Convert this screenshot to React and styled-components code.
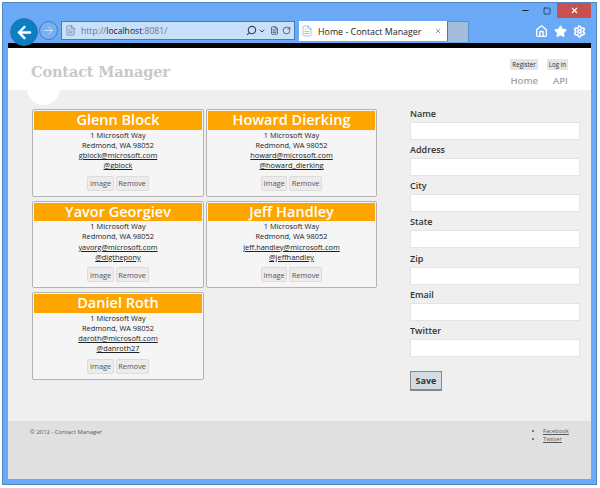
import React from 'react';
import styled, { createGlobalStyle } from 'styled-components';
import { ArrowLeft, ArrowRight, Search, ChevronDown, RotateCw, X, Home, Star, Settings, Minus, Square, FileText } from 'lucide-react';

const Global = createGlobalStyle`
  html, body { margin: 0; padding: 0; background: #fff; }
  body { width: 600px; height: 488px; overflow: hidden; font-family: "Open Sans", "Liberation Sans", sans-serif; }
  * { box-sizing: border-box; }
`;

const Page = styled.div`
  width: 600px;
  height: 488px;
  padding: 2px 3px 3px 2px;
`;
const Win = styled.div`
  height: 100%;
  background: #69a9f5;
  border: 1px solid #4f87c9;
  padding: 0 5px 5px 5px;
  display: flex;
  flex-direction: column;
`;
const TitleBar = styled.div`
  height: 18px;
  display: flex;
  justify-content: flex-end;
  align-items: flex-start;
  color: #1c2a3a;
`;
const WinBtn = styled.div`
  width: ${p => p.$w || 21}px;
  height: 15px;
  display: flex;
  align-items: center;
  justify-content: center;
  background: ${p => p.$close ? '#c75050' : 'transparent'};
  color: ${p => p.$close ? '#fff' : '#14202e'};
`;
const Chrome = styled.div`
  height: 22px;
  display: flex;
  align-items: flex-end;
  position: relative;
`;
const BackBtn = styled.div`
  position: absolute;
  left: 2px;
  top: -3px;
  width: 28px;
  height: 28px;
  border-radius: 50%;
  background: #0a7fc4;
  border: 1px solid #3a6fa8;
  display: flex;
  align-items: center;
  justify-content: center;
  color: #fff;
`;
const Forward = styled.div`
  position: absolute;
  left: 31px;
  top: 0;
  width: 19px;
  height: 19px;
  border-radius: 50%;
  border: 1px solid #3f7cc0;
  background: #76b0f5;
  display: flex;
  align-items: center;
  justify-content: center;
  color: #dfeafa;
`;
const Address = styled.div`
  margin-left: 53px;
  width: 234px;
  height: 19px;
  margin-bottom: 3px;
  background: #c8e0fa;
  border: 1px solid #3f7cc0;
  display: flex;
  align-items: center;
  padding: 0 3px;
  gap: 1px;
  color: #33475c;
`;
const Url = styled.span`
  flex: 1;
  margin-left: 4px;
  font-size: 8.6px;
  color: #6b7886;
  b { color: #222; font-weight: 400; }
`;
const Tab = styled.div`
  margin-left: 4px;
  width: 149px;
  height: 20px;
  margin-bottom: 2px;
  background: #fff;
  border-right: 1px solid #3f7cc0;
  display: flex;
  align-items: center;
  padding: 0 5px 0 2px;
  font-size: 8.9px;
  color: #222;
  white-space: nowrap;
`;
const TabTitle = styled.span`
  flex: 1;
  margin-left: 5px;
`;
const NewTab = styled.div`
  width: 21px;
  height: 21px;
  margin-bottom: 1px;
  background: #a3bcdc;
  border: 1px solid #5b8fc9;
  border-left: 0;
  border-bottom: 0;
`;
const Tools = styled.div`
  margin-left: auto;
  width: 56px;
  height: 20px;
  margin-bottom: 2px;
  display: flex;
  align-items: center;
  gap: 6px;
  color: #fff;
`;
const Viewport = styled.div`
  flex: 1;
  display: flex;
  flex-direction: column;
  border-top: 5px solid #000;
  background: #efefef;
  min-height: 0;
  overflow: hidden;
`;
const Header = styled.header`
  height: 42px;
  background: #fff;
  padding: 5px 23px 0 23px;
  display: flex;
  justify-content: space-between;
  position: relative;
  &::after {
    content: '';
    position: absolute;
    left: 19px;
    top: 24px;
    width: 33px;
    height: 33px;
    border-radius: 50%;
    background: #fff;
  }
`;
const Logo = styled.h1`
  position: relative;
  z-index: 1;
  margin: 9px 0 0;
  font: 700 14.6px/20px "DejaVu Serif", "Liberation Serif", serif;
  letter-spacing: -0.2px;
  color: #c8c8c8;
`;
const HeadRight = styled.div`
  display: flex;
  flex-direction: column;
  align-items: flex-end;
`;
const Login = styled.div`
  display: flex;
  gap: 9px;
  margin-top: 6px;
`;
const LoginLink = styled.span`
  background: #dfe5e9;
  font-size: 6.2px;
  line-height: 11px;
  padding: 0 2px;
  color: #333;
`;
const Nav = styled.nav`
  display: flex;
  gap: 15px;
  margin-top: 4px;
  font-size: 9.5px;
  font-weight: 600;
  color: #a4a4a4;
  line-height: 13px;
`;
const Main = styled.main`
  height: 331px;
  display: flex;
  padding: 19px 11px 0 24px;
  gap: 32px;
`;
const Grid = styled.div`
  width: 346px;
  display: grid;
  grid-template-columns: 172px 171px;
  grid-auto-rows: 87.5px;
  column-gap: 2px;
  row-gap: 4px;
  align-content: start;
`;
const Card = styled.article`
  background: #f5f5f5;
  border: 1px solid #b3b3b3;
  border-radius: 2px;
  padding: 1px;
  display: flex;
  flex-direction: column;
  align-items: center;
`;
const Name = styled.h2`
  align-self: stretch;
  flex: none;
  margin: 0;
  height: 18.5px;
  background: #ffa500;
  color: #fff;
  text-align: center;
  font: 600 14.5px/18px "Open Sans", "DejaVu Sans", sans-serif;
`;
const Line = styled.div`
  font-size: 7.4px;
  line-height: 10.3px;
  color: #222;
  white-space: nowrap;
`;
const LinkLine = styled(Line)`
  text-decoration: underline;
`;
const Actions = styled.div`
  display: flex;
  gap: 2px;
  margin-top: 5px;
`;
const SmallBtn = styled.button`
  height: 15px;
  padding: 0 1.5px;
  border: 1px solid #dcdcdc;
  border-radius: 2px;
  background: #ececec;
  color: #555;
  font: 7.4px "Open Sans", sans-serif;
`;
const Form = styled.form`
  width: 170px;
  display: flex;
  flex-direction: column;
  margin-top: -1px;
`;
const Label = styled.label`
  font-size: 9px;
  font-weight: 600;
  line-height: 12px;
  color: #333;
  margin-bottom: 2px;
`;
const Input = styled.div`
  height: 18px;
  background: #fff;
  border: 1px solid #e4e4e4;
  margin-bottom: 4.17px;
`;
const Save = styled.button`
  align-self: flex-start;
  width: 32px;
  height: 20px;
  margin-top: 10px;
  background: #d3dce3;
  border: 1px solid #888;
  border-bottom-width: 2px;
  padding: 0;
  color: #333;
  font: 700 9px "Open Sans", sans-serif;
`;
const Footer = styled.footer`
  flex: 1;
  background: #e0e0e0;
  padding: 6px 24px 0 22px;
  display: flex;
  justify-content: space-between;
`;
const Copy = styled.div`
  font-size: 5.9px;
  line-height: 10px;
  color: #555;
`;
const Links = styled.ul`
  margin: 0;
  padding: 0 0 0 9px;
  width: 33px;
  font-size: 5.8px;
  line-height: 8px;
  color: #555;
  white-space: nowrap;
  li { text-decoration: underline; }
`;

const contacts = [
  ['Glenn Block', 'gblock@microsoft.com', '@gblock'],
  ['Howard Dierking', 'howard@microsoft.com', '@howard_dierking'],
  ['Yavor Georgiev', 'yavorg@microsoft.com', '@digthepony'],
  ['Jeff Handley', 'jeff.handley@microsoft.com', '@jeffhandley'],
  ['Daniel Roth', 'daroth@microsoft.com', '@danroth27'],
];
const fields = ['Name', 'Address', 'City', 'State', 'Zip', 'Email', 'Twitter'];

export default function App() {
  return (
    <Page>
      <Global />
      <Win>
        <TitleBar>
          <WinBtn><Minus size={9} strokeWidth={3} /></WinBtn>
          <WinBtn><Square size={8} strokeWidth={2} /></WinBtn>
          <WinBtn $close $w={34}><X size={9} strokeWidth={3} /></WinBtn>
        </TitleBar>
        <Chrome>
          <BackBtn><ArrowLeft size={19} strokeWidth={3} /></BackBtn>
          <Forward><ArrowRight size={13} strokeWidth={1.5} /></Forward>
          <Address>
            <FileText size={11} strokeWidth={1} />
            <Url>http://<b>localhost</b>:8081/</Url>
            <Search size={11} strokeWidth={2.5} style={{ transform: 'scaleX(-1)' }} />
            <ChevronDown size={8} strokeWidth={3} />
            <FileText size={9} style={{ marginLeft: 3 }} />
            <RotateCw size={9} style={{ marginLeft: 2 }} strokeWidth={2} />
          </Address>
          <Tab>
            <FileText size={12} strokeWidth={1} color="#4f87c9" />
            <TabTitle>Home - Contact Manager</TabTitle>
            <X size={8} color="#8a8a8a" strokeWidth={2.5} />
          </Tab>
          <NewTab />
          <Tools>
            <Home size={13} strokeWidth={2.5} />
            <Star size={13} fill="#fff" />
            <Settings size={13} strokeWidth={3} />
          </Tools>
        </Chrome>
        <Viewport>
          <Header>
            <Logo>Contact Manager</Logo>
            <HeadRight>
              <Login>
                <LoginLink>Register</LoginLink>
                <LoginLink>Log in</LoginLink>
              </Login>
              <Nav><span>Home</span><span>API</span></Nav>
            </HeadRight>
          </Header>
          <Main>
            <Grid>
              {contacts.map(([name, mail, tw]) => (
                <Card key={name}>
                  <Name>{name}</Name>
                  <Line>1 Microsoft Way</Line>
                  <Line>Redmond, WA 98052</Line>
                  <LinkLine>{mail}</LinkLine>
                  <LinkLine>{tw}</LinkLine>
                  <Actions>
                    <SmallBtn>Image</SmallBtn>
                    <SmallBtn>Remove</SmallBtn>
                  </Actions>
                </Card>
              ))}
            </Grid>
            <Form>
              {fields.map(f => (
                <React.Fragment key={f}>
                  <Label>{f}</Label>
                  <Input />
                </React.Fragment>
              ))}
              <Save type="button">Save</Save>
            </Form>
          </Main>
          <Footer>
            <Copy>© 2012 - Contact Manager</Copy>
            <Links><li>Facebook</li><li>Twitter</li></Links>
          </Footer>
        </Viewport>
      </Win>
    </Page>
  );
}
